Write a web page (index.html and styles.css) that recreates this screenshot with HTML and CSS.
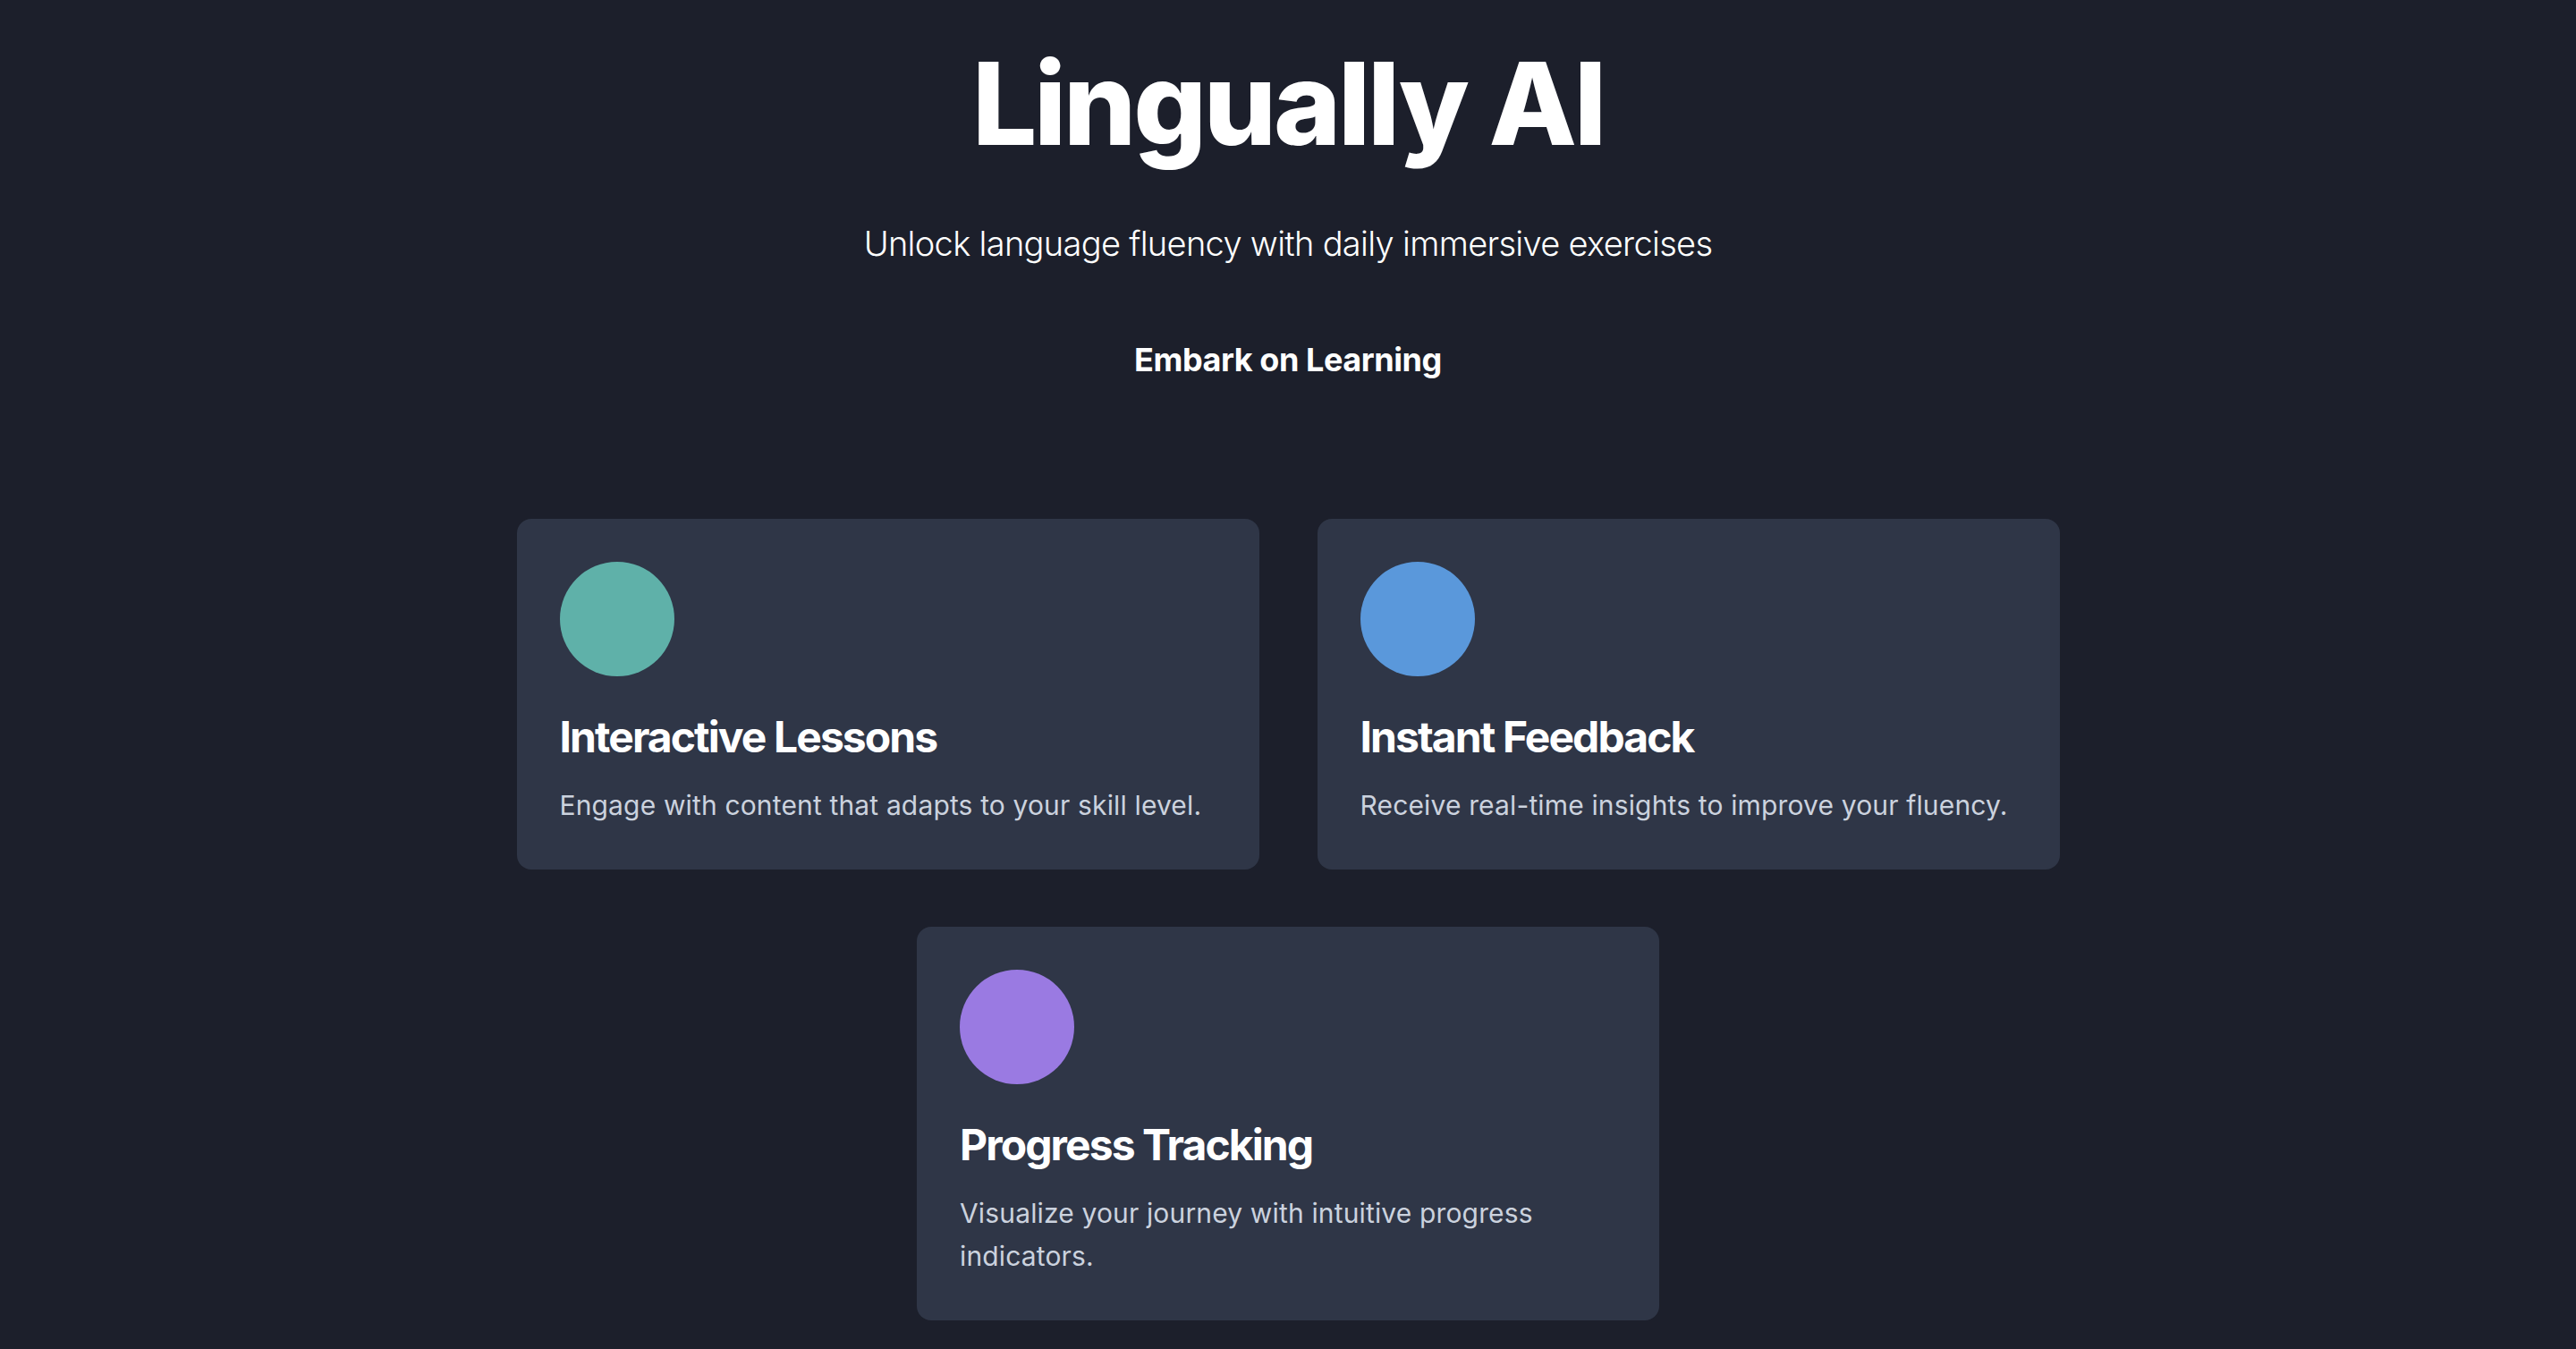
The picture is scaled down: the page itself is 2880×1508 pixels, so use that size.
FILE: index.html
```html
<!DOCTYPE html>
<html lang="en">
<head>
<meta charset="utf-8">
<title>Lingually AI</title>
<link rel="stylesheet" href="styles.css">
</head>
<body>
<main class="page">
  <header class="hero">
    <h1 class="hero-title">Lingually AI</h1>
    <p class="hero-subtitle">Unlock language fluency with daily immersive exercises</p>
    <button class="hero-cta" type="button">Embark on Learning</button>
  </header>
  <section class="features">
    <article class="card">
      <div class="card-icon icon-teal"></div>
      <h3 class="card-title">Interactive Lessons</h3>
      <p class="card-text">Engage with content that adapts to your skill level.</p>
    </article>
    <article class="card">
      <div class="card-icon icon-blue"></div>
      <h3 class="card-title">Instant Feedback</h3>
      <p class="card-text">Receive real-time insights to improve your fluency.</p>
    </article>
    <article class="card">
      <div class="card-icon icon-purple"></div>
      <h3 class="card-title">Progress Tracking</h3>
      <p class="card-text">Visualize your journey with intuitive progress indicators.</p>
    </article>
  </section>
</main>
</body>
</html>
```
FILE: styles.css
```css
* { box-sizing: border-box; }
html, body { margin: 0; padding: 0; }
body {
  background: #1c1f2b;
  color: #ffffff;
  font-family: Inter, "Noto Sans", sans-serif;
  min-height: 100vh;
}
.page {
  display: flex;
  flex-direction: column;
  align-items: center;
  padding-top: 52px;
}
.hero {
  display: flex;
  flex-direction: column;
  align-items: center;
  text-align: center;
}
.hero-title {
  margin: 0;
  font-size: 128px;
  line-height: 1;
  font-weight: 800;
  letter-spacing: -0.025em;
}
.hero-subtitle {
  margin: 64px 0 0;
  font-size: 38px;
  line-height: 1.5;
  font-weight: 300;
  letter-spacing: -0.018em;
  color: #ffffff;
}
.hero-cta {
  margin-top: 74px;
  padding: 0;
  background: transparent;
  border: 0;
  color: #ffffff;
  font-family: inherit;
  font-size: 36px;
  line-height: 1.5;
  font-weight: 700;
  letter-spacing: -0.012em;
  cursor: pointer;
}
.features {
  margin-top: 151px;
  width: 1726px;
  display: flex;
  flex-wrap: wrap;
  justify-content: center;
  gap: 64px 65px;
}
.card {
  width: 830px;
  background: #2f3647;
  border-radius: 16px;
  padding: 48px;
}
.card-icon {
  width: 128px;
  height: 128px;
  border-radius: 50%;
  margin-bottom: 40px;
}
.icon-teal { background: #5fb1a9; }
.icon-blue { background: #5a98db; }
.icon-purple { background: #9a7ae2; }
.card-title {
  margin: 0 0 24px;
  font-size: 48px;
  line-height: 56px;
  font-weight: 700;
  letter-spacing: -0.04em;
  color: #ffffff;
}
.card-text {
  margin: 0;
  font-size: 30px;
  line-height: 1.6;
  letter-spacing: 0.005em;
  color: #cbd2de;
}
```
